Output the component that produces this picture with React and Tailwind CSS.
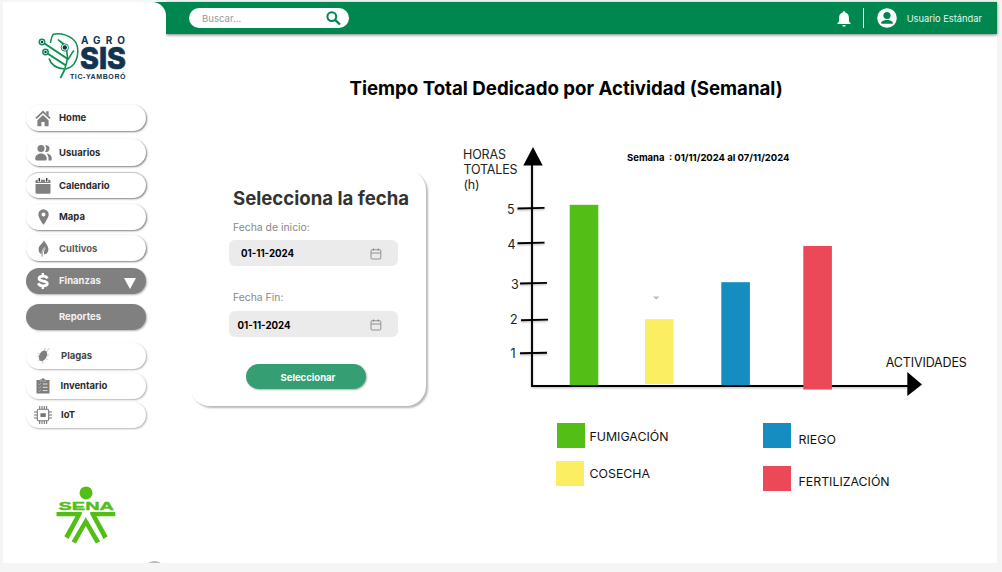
import React from "react";

const INTER = "font-['Inter',sans-serif]";

const HomeIcon = () => (
  <svg width="16" height="17" viewBox="0 0 16 17" fill="#808080">
    <path d="M1 8.300 8 1.800l7 6.500" fill="none" stroke="#808080" strokeWidth="1.800" />
    <path d="M11.200 1.300h2.400v4.500l-2.400-2z" />
    <path d="M8 5 2.400 10.200v6h4v-4.300h3.200v4.300h4v-6z" />
  </svg>
);
const UsersIcon = () => (
  <svg width="17" height="16" viewBox="0 0 17 16" fill="#808080">
    <circle cx="6" cy="3.600" r="3.500" />
    <path d="M0.200 13.800C0.200 11 2.600 8.600 6 8.600s5.800 2.400 5.800 5.200q0 1.800-1.500 1.800H1.700q-1.500 0-1.500-1.800z" />
    <path d="M10 .4a3.400 3.400 0 1 1 0 6.400 5 5 0 0 0 0-6.400zM11.500 8.500c3.200.2 5.300 2.300 5.300 5.200q0 1.900-1.300 1.900h-2c.3-3-.4-5.200-2-7.100z" />
  </svg>
);
const CalendarSolidIcon = () => (
  <svg width="16" height="16" viewBox="0 0 16 16" fill="#808080">
    <path d="M0.500 5V3.200Q.5 1.800 2 1.800h12q1.500 0 1.500 1.400V5z" />
    <path d="M0.500 6h15v8.500q0 1.300-1.300 1.300H1.800Q.5 15.800.5 14.500z" />
    <path d="M4.300 0v4M11.700 0v4" stroke="#fff" strokeWidth="3" />
    <path d="M4.300 0v3.600M11.700 0v3.600" stroke="#333" strokeWidth="1.400" />
  </svg>
);
const PinIcon = () => (
  <svg width="11" height="16" viewBox="0 0 11 16" fill="#808080">
    <path fillRule="evenodd" d="M5.500 0.300a5.200 5.200 0 0 1 5.200 5.200c0 3.500-5.200 10.300-5.200 10.300S.300 9 .300 5.500A5.200 5.200 0 0 1 5.500.300zm0 3.200a2 2 0 1 0 0 4 2 2 0 0 0 0-4z" />
  </svg>
);
const LeafIcon = () => (
  <svg width="11" height="17" viewBox="0 0 11 17" fill="#808080">
    <path d="M6 .3C7 3 10.400 5.500 10.400 9.500c0 3-1.800 4.700-4.200 5.100C5.500 12 6.500 9.500 8 7.500 5.800 9 4.500 12 4.500 16.500l-.9-.1c0-.7 0-1.400.1-2C1.600 13.500.5 11.600.6 9 .8 5.400 4.800 3.500 6 .3z" />
    <path d="M3.900 14.500C3.900 11.500 4.800 9.300 6.600 7.300" stroke="#fff" strokeWidth=".7" fill="none" />
  </svg>
);
const DollarIcon = () => (
  <svg width="12" height="16" viewBox="0 0 12 16" fill="none" stroke="#fff" strokeWidth="2.800">
    <path d="M5.800 0v3M5.800 13v3" strokeWidth="2.400" />
    <path d="M10.300 5.400C9.700 3.900 8.200 3.200 6 3.200 3.700 3.200 2 4 2 5.500c0 3.600 8.300 1.500 8.300 5 0 1.600-2 2.400-4.300 2.400-2.400 0-4-.8-4.600-2.600" />
  </svg>
);
const BugIcon = () => (
  <svg width="13" height="17" viewBox="0 0 13 17" fill="#808080">
    <ellipse cx="6" cy="8.800" rx="3.700" ry="5.600" transform="rotate(28 6 8.800)" />
    <path d="M7.500 4 8 .8M9.300 5l3-3.800M2.500 6.800.8 6M3.500 12.500l-2.300 1M5.500 14l.3 2.500M10 8l1.800.2M9 11.500l1.500 1.500M2.200 9 .3 9.200" stroke="#999" strokeWidth=".6" fill="none" />
  </svg>
);
const ClipboardIcon = () => (
  <svg width="14" height="16" viewBox="0 0 14 16">
    <path d="M.500 2h13v13.500H.500z" fill="#7c7c7c" />
    <path d="M4 3V1.300h1.700a1.300 1.300 0 0 1 2.600 0H10V3z" fill="#777" stroke="#ddd" strokeWidth=".5" />
    <path d="M6.800 6h4.700M6.800 9.300h4.700M6.800 12.600h4.700" stroke="#eee" strokeWidth=".9" />
    <path d="m2.500 6 1 .9L5.200 5M2.500 9.300l1 .9 1.700-1.900M2.500 12.600l1 .9 1.700-1.900" stroke="#ccc" strokeWidth=".7" fill="none" />
  </svg>
);
const ChipIcon = () => (
  <svg width="18" height="18" viewBox="0 0 18 18" fill="none" stroke="#777" strokeWidth="1.100">
    <rect x="3.300" y="3.300" width="11.400" height="11.400" rx="1.500" />
    <rect x="7" y="7.800" width="4.200" height="2.600" fill="#777" />
    <path d="M5.700 0v3M8 0v3M10.300 0v3M12.600 0v3M5.700 15v3M8 15v3M10.300 15v3M12.600 15v3M0 6h3M0 9h3M0 12h3M15 6h3M15 9h3M15 12h3" />
  </svg>
);

const ITEMS = [
  { label: "Home", Icon: HomeIcon, box: "h-[26px] mt-0", text: "text-[#2b2b2b]" },
  { label: "Usuarios", Icon: UsersIcon, box: "h-[27px] mt-[8px]", text: "text-[#2b2b2b]" },
  { label: "Calendario", Icon: CalendarSolidIcon, box: "h-[26px] mt-[6px] border-t border-[#c8c8c8]", text: "text-[#2b2b2b]" },
  { label: "Mapa", Icon: PinIcon, box: "h-[26px] mt-[6px]", text: "text-[#2b2b2b]" },
  { label: "Cultivos", Icon: LeafIcon, box: "h-[26px] mt-[5px]", text: "text-[#5c5c5c] pt-px" },
  { label: "Finanzas", Icon: DollarIcon, box: "h-[26px] mt-[7px]", text: "text-[#f3f3f3]", dark: true, arrow: true },
  { label: "Reportes", box: "h-[26px] mt-[9.5px]", text: "text-[#f3f3f3] pt-px", dark: true },
  { label: "Plagas", Icon: BugIcon, box: "h-[26px] mt-[13px]", text: "text-[#444] pl-[2px]", soft: true },
  { label: "Inventario", Icon: ClipboardIcon, box: "h-[26px] mt-[4.5px]", text: "text-[#2b2b2b] pl-[1.5px]", soft: true },
  { label: "IoT", Icon: ChipIcon, box: "h-[26px] mt-[3px]", text: "text-[#2b2b2b] pl-[2px]", soft: true },
];

function NavItem({ label, Icon, box, text, dark, soft, arrow }) {
  const skin = dark
    ? "bg-[#808080] shadow-[1px_1px_2px_rgba(0,0,0,0.3)]"
    : soft
    ? "bg-white shadow-[1px_1px_2px_rgba(0,0,0,0.3)]"
    : "bg-white shadow-[1px_1px_2px_rgba(0,0,0,0.5)]";
  return (
    <div className={`flex w-[120px] shrink-0 items-center rounded-full ${box} ${skin}`}>
      <span className="flex w-[33px] justify-center pl-[2px] pr-px">{Icon && <Icon />}</span>
      <span className={`text-[9.5px] font-bold leading-none ${text}`}>{label}</span>
      {arrow && (
        <svg className="mt-[4px] ml-auto mr-[10px]" width="12" height="11" viewBox="0 0 12 11">
          <path d="M0 0h12L6 11z" fill="#fff" />
        </svg>
      )}
    </div>
  );
}

function AgroLogo() {
  return (
    <svg width="96" height="50" viewBox="37 31 96 50" fill="none" className="ml-[34px] mt-[29px] shrink-0 overflow-visible">
      <g stroke="#0a8f52" strokeWidth="1.500">
        <path d="M50.500 43C51 39 52 36 53.300 34.300 60 33 70 34.500 75.500 42 79.500 49 78 60 72.500 65.500 70 68 67 68.500 65.500 69" />
        <path d="M49 58.500C51 65 57 68.500 65 69L60.500 78" strokeWidth="1.700" />
        <path d="M44.500 43.500 67 58.500M47.500 53.500 66 65.500" strokeWidth="2" />
        <path d="M58 39.500c3 3 7 4 8 8.500 1.500 6 2.500 10-1 20M74 50.500c-3 3-4 7-6.500 9.500" strokeWidth="1.600" />
        <circle cx="42" cy="42" r="2.700" fill="#fff" />
        <circle cx="45.500" cy="52" r="2.700" fill="#fff" />
        <circle cx="64.800" cy="47.500" r="3.700" fill="#fff" strokeWidth="1" />
      </g>
      <g fill="#12344f">
        <circle cx="42" cy="42" r="1.200" />
        <circle cx="45.500" cy="52" r="1.200" />
        <circle cx="64.800" cy="47.500" r="2.200" />
        <text x="81" y="43.500" fontSize="10" fontWeight="700" textLength="44" fontFamily="Inter, sans-serif">AGRO</text>
        <text x="80" y="69.300" fontSize="30.500" fontWeight="800" textLength="46" lengthAdjust="spacingAndGlyphs" fontFamily="Inter, sans-serif" stroke="#12344f" strokeWidth=".7">SIS</text>
        <text x="70" y="78.800" fontSize="7" fontWeight="700" textLength="55.500" fontFamily="Liberation Sans, sans-serif">TIC-YAMBORÓ</text>
      </g>
    </svg>
  );
}

function SenaLogo() {
  return (
    <svg width="60" height="58" viewBox="56 485 60 58" fill="#53bf16" className="ml-[53px] mt-[57.5px] shrink-0">
      <circle cx="86" cy="491.900" r="6.500" />
      <text x="58.500" y="509" fontSize="11.800" fontWeight="700" stroke="#53bf16" strokeWidth=".4" textLength="55.500" lengthAdjust="spacingAndGlyphs" fontFamily="Liberation Sans, sans-serif">SENA</text>
      <path d="M56.500 511h25.300v2L68.500 538l-4.200-2.700L75.500 515.300h-19zM115.300 511H90.200v2l13.300 25 4.200-2.700L96.500 515.300h18.800z" />
      <path d="M85.800 516.300 71.500 540.500l4.400 2 9.900-17.500 10 17.500 4.400-2z" />
    </svg>
  );
}

function CalendarIcon() {
  return (
    <svg width="12" height="12" viewBox="0 0 12 12" fill="none" stroke="#888" strokeWidth=".9">
      <rect x="1" y="1.700" width="9.800" height="9.300" rx="1" />
      <path d="M1 5h9.800M3.500.4v2.400M8.300.4v2.400" />
    </svg>
  );
}

function DateField({ value, className }) {
  return (
    <div className={`flex h-[26px] w-[169px] items-center justify-between rounded-[6px] bg-[#ebebeb] pr-[16px] ${className}`}>
      <span className="pt-px text-[9.7px] font-bold leading-none text-black">{value}</span>
      <CalendarIcon />
    </div>
  );
}

const TICKS = [
  { n: 5, x: 507, y: 213.500, x1: 517.500, x2: 544.500, ty: 208 },
  { n: 4, x: 507.500, y: 248.500, x1: 517.500, x2: 544.500, ty: 242.700 },
  { n: 3, x: 511, y: 288.500, x1: 520, x2: 547, ty: 283 },
  { n: 2, x: 510, y: 324, x1: 521, x2: 548, ty: 319.700 },
  { n: 1, x: 510.500, y: 357.500, x1: 520, x2: 547, ty: 352.800 },
];
const BARS = [
  { x: 569.700, y: 204.800, h: 180.500, fill: "#53bf16" },
  { x: 645, y: 319.200, h: 64.800, fill: "#fcee62" },
  { x: 721.300, y: 282.200, h: 103, fill: "#158dc1" },
  { x: 803.300, y: 246, h: 143.500, fill: "#eb4858" },
];

function Chart() {
  return (
    <svg width="540" height="260" viewBox="450 141 540 260" className="block">
      <g fontFamily="Inter, sans-serif" fill="#222" fontSize="12.500">
        <text x="463" y="159" textLength="43">HORAS</text>
        <text x="463.500" y="174" textLength="54">TOTALES</text>
        <text x="463.500" y="189" textLength="16">(h)</text>
        {TICKS.map((t) => (
          <text key={t.n} x={t.x} y={t.y}>{t.n}</text>
        ))}
        <text x="885.800" y="367" textLength="81" fill="#111">ACTIVIDADES</text>
      </g>
      <text x="627" y="161" fontFamily="Inter, sans-serif" fontSize="9.500" fontWeight="700" textLength="162.500">{"Semana \u00a0: 01/11/2024 al 07/11/2024"}</text>
      <g className="drop-shadow-[0_1.5px_0.8px_rgba(0,0,0,0.3)]">
        <path d="M532 164V386H908" fill="none" stroke="#000" strokeWidth="1.900" />
        {TICKS.map((t) => (
          <line key={t.n} x1={t.x1} y1={t.ty + 0.5} x2={t.x2} y2={t.ty - 0.1} stroke="#000" strokeWidth="1.900" />
        ))}
      </g>
      <path d="M533 147 542.700 165.500H523.300z" />
      <path d="M907.300 372 922 384.500 907.300 396z" />
      {BARS.map((b) => (
        <rect key={b.fill} x={b.x} y={b.y} width="28.600" height={b.h} fill={b.fill} />
      ))}
      <path d="M653 296.500h6.500l-3.300 3z" fill="#bbb" />
    </svg>
  );
}

function LegendItem({ color, label, className, labelClass }) {
  return (
    <div className={`flex h-[25px] items-center ${className}`}>
      <span className={`h-[25px] w-[27.5px] shrink-0 ${color}`} />
      <span className={`whitespace-nowrap text-[12.35px] leading-none text-[#111] ${labelClass}`}>{label}</span>
    </div>
  );
}

export default function App() {
  return (
    <div className={`h-[572px] w-[1002px] overflow-hidden bg-[#f5f5f5] pt-[2px] pl-[3px] ${INTER}`}>
      <div className="flex h-[561px] w-[994px] bg-white">
        <div className="relative z-10 w-[163px] shrink-0 bg-[linear-gradient(#00874f_32px,#fff_32px)]">
          <aside className="flex h-[561px] flex-col overflow-hidden rounded-tr-[14px] bg-white">
            <AgroLogo />
            <nav className="mt-[24px] flex flex-col pl-[23px]">
              {ITEMS.map((item) => (
                <NavItem key={item.label} {...item} />
              ))}
            </nav>
            <SenaLogo />
            <span className="mt-[17.5px] ml-[145px] h-[6px] w-[13px] shrink-0 rounded-[50%] bg-[#bdbdbd]" />
          </aside>
        </div>
        <div className="flex w-[831px] flex-col">
          <header className="flex h-[32px] shrink-0 items-center bg-[#00874f] pl-[23px] pr-[15px] shadow-[0_1px_3px_rgba(0,0,0,0.5)]">
            <div className="flex h-[20.5px] w-[160px] items-center justify-between rounded-full bg-white pl-[13px] pr-[8px]">
              <span className="pt-px text-[9.6px] leading-none text-[#999]">Buscar...</span>
              <svg width="15" height="15" viewBox="0 0 15 15" fill="none" stroke="#00874f">
                <circle cx="5.800" cy="5.600" r="4.400" strokeWidth="2" />
                <path d="m9 8.800 5 4.700" strokeWidth="2.400" />
              </svg>
            </div>
            <svg className="ml-auto mt-px" width="14" height="16" viewBox="0 0 14 16" fill="#fff">
              <path d="M7 .300c.8 0 1.300.5 1.300 1.300 2.300.6 3.600 2.400 3.600 4.900v4.100l1.600 1.500v.9H.500v-.9l1.600-1.500V6.500c0-2.500 1.300-4.300 3.600-4.900C5.700.800 6.200.300 7 .300zM5.300 14h3.400a1.700 1.700 0 0 1-3.400 0z" />
            </svg>
            <span className="ml-[12px] h-[20px] w-px bg-white" />
            <svg className="ml-[13px]" width="20" height="20" viewBox="0 0 20 20">
              <circle cx="10" cy="10" r="9.800" fill="#fff" />
              <circle cx="10" cy="7.500" r="3.600" fill="#00874f" />
              <path d="M4.200 15.800v-.9c0-1.800 3-3 5.800-3s5.800 1.200 5.800 3v.9z" fill="#00874f" />
            </svg>
            <span className="ml-[10px] whitespace-nowrap pt-[2px] text-[9.3px] leading-none text-[#e8f4ee]">Usuario Estándar</span>
          </header>
          <main className="flex flex-col">
            <h1 className="mt-[42px] ml-[183.5px] whitespace-nowrap text-[18.65px] font-bold leading-[24px] text-black">
              Tiempo Total Dedicado por Actividad (Semanal)
            </h1>
            <div className="flex">
              <section className="mt-[70px] ml-[24px] flex h-[236px] w-[236px] shrink-0 flex-col rounded-[20px] bg-white pl-[39px] shadow-[2px_2px_2px_rgba(0,0,0,0.28)]">
                <h2 className="mt-[16px] ml-[4px] whitespace-nowrap text-[18.6px] font-bold leading-[24px] text-[#333]">Selecciona la fecha</h2>
                <p className="mt-[11px] ml-[4px] text-[10.4px] leading-[14px] text-[#888]">Fecha de inicio:</p>
                <DateField value="01-11-2024" className="mt-[5px] pl-[12px] pt-px" />
                <p className="mt-[25px] ml-[4px] text-[10.4px] leading-[14px] text-[#888]">Fecha Fin:</p>
                <DateField value="01-11-2024" className="mt-[6px] pl-[8.5px] pt-[2px]" />
                <button className="mt-[27px] ml-[16.5px] h-[25px] w-[120px] rounded-full bg-[#359e73] pl-[5px] pt-[2px] text-[9.5px] font-bold leading-none text-white shadow-[1px_1px_2px_rgba(0,0,0,0.3)]">
                  Seleccionar
                </button>
              </section>
              <section className="ml-[24px] mt-[41px]">
                <Chart />
                <div className="mt-[22px] flex">
                  <div className="w-[207px] shrink-0 pl-[106px]">
                    <LegendItem color="bg-[#53bf16]" label="FUMIGACIÓN" className="pl-px" labelClass="ml-[5px] pt-[3px]" />
                    <LegendItem color="bg-[#fcee62]" label="COSECHA" className="mt-[13px]" labelClass="ml-[6px] pt-[2px]" />
                  </div>
                  <div className="pl-[106px]">
                    <LegendItem color="bg-[#158dc1]" label="RIEGO" className="" labelClass="ml-[8px] pt-[9px]" />
                    <LegendItem color="bg-[#eb4858]" label="FERTILIZACIÓN" className="mt-[18px]" labelClass="ml-[8px] pt-[7px]" />
                  </div>
                </div>
              </section>
            </div>
          </main>
        </div>
      </div>
    </div>
  );
}
